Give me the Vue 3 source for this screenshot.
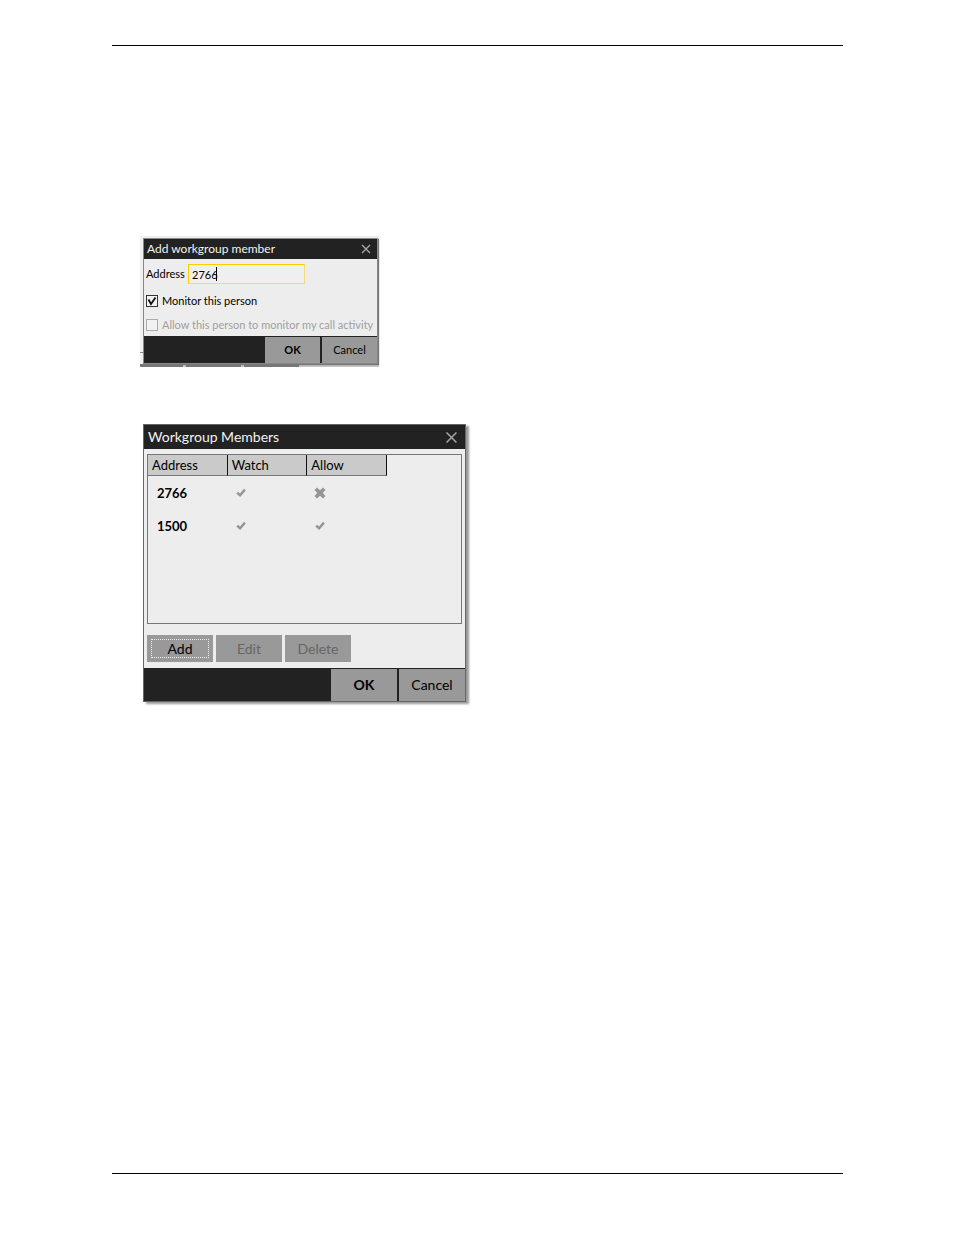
<script setup>
import { ref } from 'vue'

const address = ref('2766')
const monitor = ref(true)
const allow = ref(false)

const members = [
  { address: '2766', watch: true, allow: false },
  { address: '1500', watch: true, allow: true },
]
</script>

<template>
  <div class="page">
    <main class="content">
      <div class="backdrop">
        <section class="dialog small" aria-labelledby="add-title">
          <header class="titlebar">
            <h2 id="add-title">Add workgroup member</h2>
            <button class="close" type="button" aria-label="Close">
              <svg viewBox="0 0 10 10"><path d="M1 1 9 9M9 1 1 9" /></svg>
            </button>
          </header>
          <form class="form" @submit.prevent>
            <div class="field">
              <label for="address">Address</label>
              <span class="textbox">
                <input id="address" v-model="address" type="text" />
                <span class="caret"></span>
              </span>
            </div>
            <label class="option first">
              <span class="box">
                <input v-model="monitor" type="checkbox" />
                <svg v-if="monitor" viewBox="0 0 12 12"><path d="M2.5 4.5 5 9 9.5 2.5" /></svg>
              </span>
              <span>Monitor this person</span>
            </label>
            <label class="option disabled">
              <span class="box">
                <input v-model="allow" type="checkbox" disabled />
              </span>
              <span>Allow this person to monitor my call activity</span>
            </label>
          </form>
          <footer class="actions">
            <button class="ok" type="button">OK</button>
            <button type="button">Cancel</button>
          </footer>
        </section>
        <div class="taskbar"><i></i><i></i><i></i></div>
      </div>

      <section class="dialog large" aria-labelledby="members-title">
        <header class="titlebar">
          <h2 id="members-title">Workgroup Members</h2>
          <button class="close" type="button" aria-label="Close">
            <svg viewBox="0 0 10 10"><path d="M0.5 0.5 9.5 9.5M9.5 0.5 0.5 9.5" /></svg>
          </button>
        </header>
        <div class="list">
          <table>
            <thead>
              <tr><th>Address</th><th>Watch</th><th>Allow</th></tr>
            </thead>
            <tbody>
              <tr v-for="m in members" :key="m.address">
                <td class="number">{{ m.address }}</td>
                <td v-for="(on, i) in [m.watch, m.allow]" :key="i" class="mark">
                  <svg v-if="on" viewBox="0 0 12 12"><path d="M1.3 6.5 3 4.8 5 6.6 9 1.8 10.8 3.4 5.2 10Z" /></svg>
                  <svg v-else viewBox="0 0 12 12"><path d="M0.5 3 3 0.5 6 3.3 9 0.5 11.5 3 8.7 6 11.5 9 9 11.5 6 8.7 3 11.5 0.5 9 3.3 6Z" /></svg>
                </td>
              </tr>
            </tbody>
          </table>
        </div>
        <div class="tools">
          <button class="focused" type="button">Add</button>
          <button type="button" disabled>Edit</button>
          <button type="button" disabled>Delete</button>
        </div>
        <footer class="actions">
          <button class="ok" type="button">OK</button>
          <button type="button">Cancel</button>
        </footer>
      </section>
    </main>
  </div>
</template>

<style>
body {
  background: #fff;
}
</style>

<style scoped>
.page {
  box-sizing: border-box;
  min-height: 100vh;
  padding: 45px 111px 61px 112px;
  display: flex;
  font-family: Lato, "Open Sans", sans-serif;
  color: #000;
}
.content {
  flex: 1;
  border-top: 1px solid #000;
  border-bottom: 1px solid #000;
  padding: 190px 28px 0;
  display: flex;
  flex-direction: column;
  align-items: flex-start;
  gap: 57px;
}
button {
  border: 0;
  padding: 0;
  font: inherit;
  color: #000;
  background: #999;
}
.backdrop {
  box-sizing: border-box;
  width: 239px;
  padding: 2px 0 0 3px;
  background: #f0f0f0;
  position: relative;
}
.backdrop::before {
  content: "";
  position: absolute;
  left: 0;
  right: 0;
  bottom: 14px;
  height: 1px;
  background: #888;
}
.dialog {
  box-sizing: border-box;
  position: relative;
  background: #ededed;
  border: 1px solid #666;
}
.small {
  width: 235px;
  font-size: 11px;
  line-height: 16px;
  z-index: 1;
  border-color: #888;
  box-shadow: 1px 1px 1px #777;
}
.large {
  width: 323px;
  margin-left: 3px;
  font-size: 14px;
  line-height: 20px;
  box-shadow: 3px 2px 2px #999;
}
.titlebar {
  display: flex;
  align-items: center;
  justify-content: space-between;
  background: #222;
  color: #f2f2f2;
}
.small .titlebar {
  height: 20px;
  padding: 0 6px 0 3px;
}
.large .titlebar {
  height: 24px;
  padding: 0 8px 0 4px;
}
h2 {
  margin: 0;
  font-size: 12px;
  font-weight: 400;
}
.large h2 {
  font-size: 14px;
}
.close {
  display: flex;
  background: none;
}
.close svg {
  width: 10px;
  height: 10px;
  fill: none;
  stroke: #a5a5a5;
  stroke-width: 1.4;
}
.large .close svg {
  width: 11px;
  height: 11px;
}
.form {
  padding: 5px 2px 3px;
}
.field {
  display: flex;
  align-items: center;
  gap: 3px;
}
.field label {
  width: 39px;
}
.textbox {
  position: relative;
  display: flex;
}
.textbox input {
  box-sizing: border-box;
  width: 117px;
  height: 20px;
  padding: 0 3px;
  border: 1px solid #f0dc78;
  border-top-color: #fc0;
  border-left-color: #fc0;
  outline: 0;
  background: #efefef;
  font: inherit;
  color: #000;
}
.caret {
  position: absolute;
  left: 28px;
  top: 3px;
  width: 1px;
  height: 14px;
  background: #000;
}
.option {
  display: flex;
  align-items: center;
  gap: 4px;
  white-space: nowrap;
}
.first {
  margin: 9px 0 8px;
}
.box {
  position: relative;
  display: flex;
}
.box input {
  appearance: none;
  box-sizing: border-box;
  width: 12px;
  height: 12px;
  margin: 0;
  border: 1px solid #333;
  background: #f2f2f2;
}
.box svg {
  position: absolute;
  inset: 0;
  fill: none;
  stroke: #111;
  stroke-width: 1.8;
  pointer-events: none;
}
.disabled {
  color: #a0a0a0;
}
.disabled .box input {
  border-color: #aaa;
}
.actions {
  display: flex;
  justify-content: flex-end;
  gap: 2px;
  padding-top: 1px;
  background: #222;
}
.small .actions button {
  width: 55px;
  height: 26px;
}
.large .actions button {
  width: 66px;
  height: 32px;
}
.actions .ok {
  font-weight: 700;
}
.taskbar {
  height: 3px;
  margin-left: -3px;
  display: grid;
  grid-template-columns: 43px 55px 55px;
  gap: 3px;
  background: #c4c4c4;
}
.taskbar i {
  background: #777;
}
.list {
  box-sizing: border-box;
  height: 170px;
  margin: 5px 3px 0;
  border: 1px solid #777;
}
table {
  width: 239px;
  table-layout: fixed;
  border-collapse: separate;
  border-spacing: 0;
}
th {
  box-sizing: border-box;
  height: 21px;
  padding: 0 4px;
  border-right: 1px solid #111;
  border-bottom: 1px solid #777;
  background: #cacaca;
  font-size: 13px;
  font-weight: 400;
  line-height: 20px;
  text-align: left;
}
td {
  height: 33px;
  padding: 0 9px;
  vertical-align: middle;
}
.number {
  font-size: 13px;
  font-weight: 700;
}
.mark svg {
  display: block;
  width: 12px;
  height: 12px;
  margin-left: -2px;
  fill: #959595;
}
.tools {
  display: flex;
  gap: 3px;
  padding: 11px 3px 6px;
}
.tools button {
  position: relative;
  width: 66px;
  height: 27px;
}
.tools button:disabled {
  color: #666;
}
.tools .focused::after {
  content: "";
  position: absolute;
  inset: 4px;
  border: 1px dotted #eee;
}
</style>
